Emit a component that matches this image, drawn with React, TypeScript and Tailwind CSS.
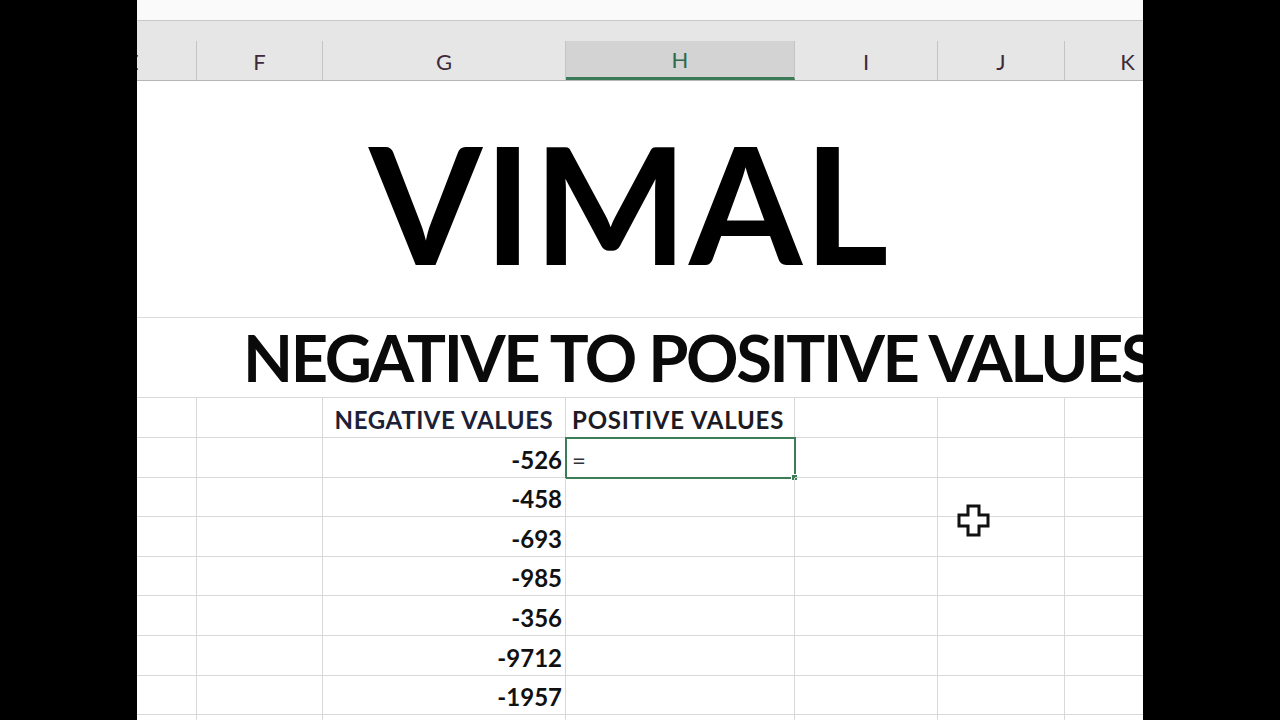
const cols = [
  { key: 'E', w: 'w-[60px]' },
  { key: 'F', w: 'w-[126px]' },
  { key: 'G', w: 'w-[243px]' },
  { key: 'H', w: 'w-[229px]' },
  { key: 'I', w: 'w-[143px]' },
  { key: 'J', w: 'w-[127px]' },
  { key: 'K', w: 'w-[140px]' },
]

const values = ['-526', '-458', '-693', '-985', '-356', '-9712', '-1957', '']
const rowHeights = ['h-[40px]', 'h-[40px]', 'h-[39px]', 'h-[40px]', 'h-[39px]', 'h-[40px]', 'h-[40px]', 'h-[39px]', 'h-[40px]']

function ColumnHeader() {
  return (
    <div className="flex h-[60px] shrink-0 bg-[#e6e6e6] border-b border-[#b5b5b5]">
      {cols.map((c) => {
        const selected = c.key === 'H'
        return (
          <div key={c.key} className={`${c.w} shrink-0 flex items-end`}>
            <div
              className={`w-full h-[39px] flex items-center pt-[2px] ${c.key === 'E' ? 'justify-start' : 'justify-center'} border-r border-[#c4c4c4] ${
                selected ? 'bg-[#d3d3d3] border-b-[3px] border-b-[#3b7a57] text-[#2f6a4c]' : 'text-[#3d2a3a]'
              } text-[22px] leading-none`}
            >
              <span className={c.key === 'E' ? '-ml-[11px]' : c.key === 'K' ? 'ml-[-14px]' : ''}>{c.key}</span>
            </div>
          </div>
        )
      })}
    </div>
  )
}

function Cursor() {
  return (
    <svg
      className="absolute left-[820px] top-[504px] pointer-events-none"
      width="34"
      height="33"
      viewBox="0 0 34 33"
    >
      <path
        d="M11 2 H22 V11 H31 V22 H22 V31 H11 V22 H2 V11 H11 Z"
        fill="#ffffff"
        stroke="#111111"
        strokeWidth="3"
        strokeLinejoin="miter"
      />
    </svg>
  )
}

export default function App() {
  return (
    <div className="w-[1280px] h-[720px] bg-black flex justify-center overflow-hidden">
      <div
        className="relative w-[1006px] h-full bg-white flex flex-col overflow-hidden"
        style={{ fontFamily: 'Lato, "Open Sans", sans-serif' }}
      >
        <div className="h-[21px] shrink-0 bg-[#fafafa] border-b border-[#c9c9c9]" />
        <ColumnHeader />

        {/* merged title rows */}
        <div className="h-[237px] shrink-0 border-b border-[#dcdcdc] flex items-center pl-[232px]">
          <span className="text-[163px] font-bold leading-none text-black tracking-[1.5px] mt-[6px]">VIMAL</span>
        </div>
        <div className="h-[80px] shrink-0 border-b border-[#d9d9d9] flex items-center pl-[106px] whitespace-nowrap">
          <span className="text-[65px] font-bold leading-none text-[#0a0a0a] tracking-[-2.4px] mt-[0px]">NEGATIVE TO POSITIVE VALUES</span>
        </div>

        {/* grid rows */}
        {rowHeights.map((h, r) => (
          <div key={r} className={`flex ${h} shrink-0`}>
            {cols.map((c) => {
              let content: React.ReactNode = null
              let align = 'justify-end'
              if (r === 0 && c.key === 'G') {
                content = <span className="text-[#1c2138] tracking-[0.6px]">NEGATIVE VALUES</span>
                align = 'justify-center'
              } else if (r === 0 && c.key === 'H') {
                content = <span className="text-[#1e1a22] tracking-[0.8px] pl-[6px]">POSITIVE VALUES</span>
                align = 'justify-start'
              } else if (c.key === 'G' && values[r - 1]) {
                content = <span className="pr-[3px] text-[#111]">{values[r - 1]}</span>
              } else if (r === 1 && c.key === 'H') {
                content = <span className="pl-[6px] font-normal text-[#333]">=</span>
                align = 'justify-start'
              }
              return (
                <div
                  key={c.key}
                  className={`${c.w} shrink-0 relative flex items-end ${align} pb-[5px] border-r border-b border-[#d9d9d9] text-[24px] font-bold leading-none whitespace-nowrap`}
                >
                  {content}
                  {r === 1 && c.key === 'H' && (
                    <div className="absolute -left-[1px] -top-[1px] -right-[2px] -bottom-[2px] border-2 border-[#3a7d57] pointer-events-none">
                      <div className="absolute -right-[4px] -bottom-[4px] w-[7px] h-[7px] bg-[#3a7d57] border border-white" />
                    </div>
                  )}
                </div>
              )
            })}
          </div>
        ))}

        <Cursor />
      </div>
    </div>
  )
}
